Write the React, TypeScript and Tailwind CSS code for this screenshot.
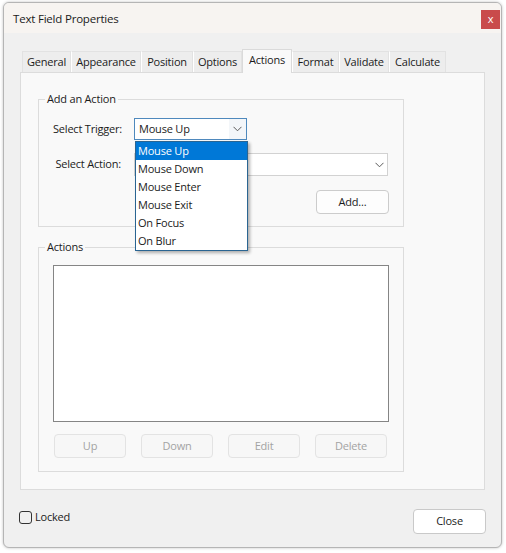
import React from "react";

const font = { fontFamily: '"Open Sans", "Noto Sans", sans-serif', letterSpacing: "-0.2px" };

function Chevron() {
  return (
    <svg width="9" height="6" viewBox="0 0 9 6" fill="none">
      <path d="M0.5 0.8 L4.5 4.8 L8.5 0.8" stroke="#5a5a5a" strokeWidth="1" />
    </svg>
  );
}

const tabs: { label: string; w: string; active?: boolean }[] = [
  { label: "General", w: "w-[49px]" },
  { label: "Appearance", w: "w-[70px]" },
  { label: "Position", w: "w-[52px]" },
  { label: "Options", w: "w-[49px]" },
  { label: "Actions", w: "w-[50px]", active: true },
  { label: "Format", w: "w-[47px]" },
  { label: "Validate", w: "w-[50px]" },
  { label: "Calculate", w: "w-[57px]" },
];

const items = ["Mouse Up", "Mouse Down", "Mouse Enter", "Mouse Exit", "On Focus", "On Blur"];

export default function App() {
  return (
    <div
      className="w-[506px] h-[553px] bg-white overflow-hidden pt-[2px] pl-[3px] text-[11px] text-[#1b1b1b] whitespace-nowrap"
      style={font}
    >
      <div className="relative w-[499px] h-[546px] rounded-[6px] border border-[#b5b5b5] bg-[#f0f0f0] shadow-[0_0_3px_rgba(0,0,0,0.25)] flex flex-col overflow-hidden">
        {/* title bar */}
        <div className="h-[30px] bg-[#f7f4f1] flex items-center justify-between pl-[9px] pr-[1px]">
          <span className="text-[11.5px] text-[#1b1b1b] leading-none mt-[1px]">Text Field Properties</span>
          <div className="w-[19px] h-[19px] bg-[#c94b4b] text-white flex items-center justify-center text-[11px] leading-none pb-[2px] mt-[2px]">
            x
          </div>
        </div>

        {/* body */}
        <div className="flex-1 flex flex-col pl-[16px] pr-[14px] pt-[16px]">
          {/* tabs */}
          <div className="flex items-end pl-[2px] h-[23px]">
            {tabs.map((t) =>
              t.active ? (
                <div
                  key={t.label}
                  className={`${t.w} h-[24px] -mb-[1px] bg-[#f9f9f9] border border-b-0 border-[#dadada] flex items-center justify-center pb-[2px] relative z-10`}
                >
                  {t.label}
                </div>
              ) : (
                <div
                  key={t.label}
                  className={`${t.w} h-[21px] bg-[#ededed] border border-[#e2e2e2] border-l-white border-b-0 first:border-l-[#e2e2e2] flex items-center justify-center pt-[1px]`}
                >
                  {t.label}
                </div>
              )
            )}
          </div>

          {/* panel */}
          <div className="w-[465px] h-[418px] bg-[#f9f9f9] border border-[#dcdcdc] pl-[17px] pt-[18px]">
            {/* Add an Action */}
            <fieldset className="relative w-[366px] h-[136px] border border-[#dcdcdc]">
              <legend className="ml-[6px] px-[2px] leading-[16px]">Add an Action</legend>
              <div className="px-[14px]">
                <div className="flex items-center mt-[11px]">
                  <span className="w-[68px] text-right">Select Trigger:</span>
                  <div className="ml-[13px] w-[113px] h-[22px] bg-white border border-[#4f89bd] flex items-center">
                    <span className="flex-1 pl-[4px]">Mouse Up</span>
                    <span className="w-[17px] h-full bg-[#f3f6f9] flex items-center justify-center">
                      <Chevron />
                    </span>
                  </div>
                </div>
                <div className="flex items-center mt-[13px]">
                  <span className="w-[68px] text-right">Select Action:</span>
                  <div className="ml-[13px] w-[254px] h-[23px] bg-white border border-[#d2d2d2] flex items-center justify-end pr-[3px]">
                    <Chevron />
                  </div>
                </div>
                <div className="flex justify-end mt-[14px]">
                  <button className="w-[73px] h-[24px] bg-[#fdfdfd] border border-[#cccccc] rounded-[4px] text-[#1b1b1b]">
                    Add...
                  </button>
                </div>
              </div>

              {/* dropdown list */}
              <div className="absolute left-[96px] top-[34px] w-[113px] bg-white border border-[#2a6592] shadow-[2px_2px_3px_rgba(0,0,0,0.3)] z-20">
                {items.map((it, i) => (
                  <div
                    key={it}
                    className={`h-[18px] flex items-center pl-[2px] ${
                      i === 0 ? "bg-[#0078d7] text-white" : "text-[#1b1b1b]"
                    }`}
                  >
                    {it}
                  </div>
                ))}
              </div>
            </fieldset>

            {/* Actions */}
            <fieldset className="mt-[12px] w-[366px] h-[233px] border border-[#dcdcdc]">
              <legend className="ml-[6px] px-[2px] leading-[16px]">Actions</legend>
              <div className="pl-[14px]">
                <div className="mt-[10px] w-[336px] h-[157px] bg-white border border-[#858585]" />
                <div className="flex gap-[15px] mt-[12px] pl-[1px]">
                  {["Up", "Down", "Edit", "Delete"].map((b) => (
                    <button
                      key={b}
                      className="w-[72px] h-[24px] bg-[#f7f7f7] border border-[#e3e3e3] rounded-[4px] text-[#a3a3a3]"
                    >
                      {b}
                    </button>
                  ))}
                </div>
              </div>
            </fieldset>
          </div>

          {/* footer */}
          <div className="flex items-start justify-between mt-[18px] -ml-[1px]">
            <label className="flex items-center gap-[3px] mt-[1px]">
              <span className="w-[13px] h-[13px] rounded-[3px] border border-[#333333] bg-transparent" />
              <span>Locked</span>
            </label>
            <button className="w-[73px] h-[25px] mt-[1px] mr-[1px] bg-white border border-[#c9c9c9] rounded-[4px] text-[#1b1b1b]">
              Close
            </button>
          </div>
        </div>
      </div>
    </div>
  );
}
